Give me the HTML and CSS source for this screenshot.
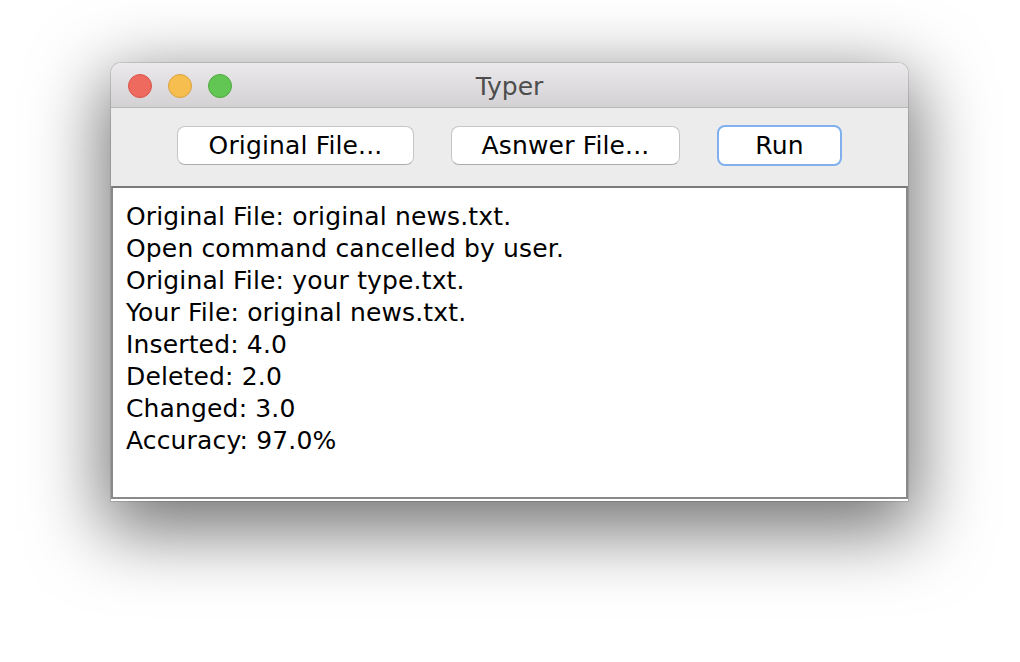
FILE: index.html
```html
<!DOCTYPE html>
<html>
<head>
<meta charset="utf-8">
<link rel="stylesheet" href="styles.css">
</head>
<body>
<div class="window">
  <div class="titlebar">
    <div class="lights">
      <span class="light red"></span>
      <span class="light yellow"></span>
      <span class="light green"></span>
    </div>
    <div class="title">Typer</div>
    <div class="spacer"></div>
  </div>
  <div class="toolbar">
    <button class="btn btn-orig">Original File...</button>
    <button class="btn btn-ans">Asnwer File...</button>
    <button class="btn btn-run focused">Run</button>
  </div>
  <div class="textarea">
    <div class="line">Original File: original news.txt.</div>
    <div class="line">Open command cancelled by user.</div>
    <div class="line">Original File: your type.txt.</div>
    <div class="line">Your File: original news.txt.</div>
    <div class="line">Inserted: 4.0</div>
    <div class="line">Deleted: 2.0</div>
    <div class="line">Changed: 3.0</div>
    <div class="line">Accuracy: 97.0%</div>
  </div>
</div>
</body>
</html>
```

FILE: styles.css
```css
html, body {
  margin: 0;
  padding: 0;
  background: #ffffff;
}
body {
  width: 1020px;
  height: 662px;
  overflow: hidden;
  padding: 63px 0 0 111px;
  box-sizing: border-box;
  font-family: "DejaVu Sans", "Liberation Sans", sans-serif;
}
.window {
  width: 797px;
  height: 438px;
  border-radius: 10px 10px 0 0;
  background: #ffffff;
  box-shadow: 0 0 0 1px rgba(0,0,0,0.12), 0 22px 72px 8px rgba(0,0,0,0.55);
  display: flex;
  flex-direction: column;
  overflow: hidden;
}
.titlebar {
  height: 44px;
  flex: none;
  border-bottom: 1px solid #b9b9b9;
  background: linear-gradient(#ebe9eb, #d3d1d3);
  display: grid;
  grid-template-columns: 1fr auto 1fr;
  align-items: center;
}
.lights {
  display: flex;
  gap: 16px;
  padding-left: 17px;
  padding-top: 1px;
}
.light {
  width: 24px;
  height: 24px;
  border-radius: 50%;
  box-sizing: border-box;
}
.red { background: #ef6a5e; border: 1px solid #d9544a; }
.yellow { background: #f6be4f; border: 1px solid #d9a23e; }
.green { background: #62c655; border: 1px solid #51a93f; }
.title {
  font-size: 25px;
  color: #4d4d4d;
  padding-top: 2px;
}
.toolbar {
  height: 78px;
  flex: none;
  display: flex;
  justify-content: center;
  align-items: center;
  gap: 37px;
  background: #ececec;
  padding-bottom: 4px;
  box-sizing: border-box;
}
.btn {
  height: 39px;
  background: #ffffff;
  border: 1px solid #c6c6c6;
  border-bottom-color: #ababab;
  border-radius: 8px;
  font-family: inherit;
  font-size: 25px;
  letter-spacing: 0.15px;
  color: #000;
  padding: 0;
  margin: 0;
}
.btn-orig { width: 237px; }
.btn-ans { width: 229px; }
.btn-run { width: 125px; height: 41px; }
.focused {
  border: 2px solid #80b0ee;
}
.textarea {
  flex: 1;
  background: #ffffff;
  border: 2px solid #8a8a8a;
  border-top-color: #7a7a7a;
  margin-bottom: 2px;
  padding: 13px 12px 0 13px;
  font-size: 25px;
  letter-spacing: 0.15px;
  line-height: 32px;
  color: #000;
}
```
